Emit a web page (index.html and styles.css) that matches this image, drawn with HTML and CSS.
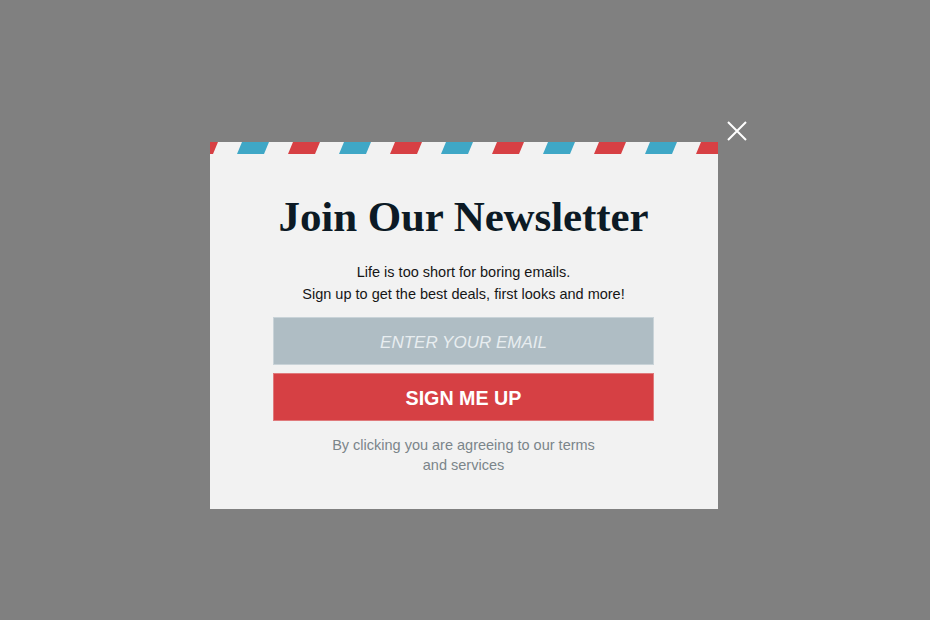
FILE: index.html
```html
<!DOCTYPE html>
<html lang="en">
<head>
<meta charset="utf-8">
<title>Join Our Newsletter</title>
<link rel="stylesheet" href="styles.css">
</head>
<body>
<div class="overlay">
  <div class="modal">
    <button class="close" aria-label="Close">
      <svg width="20" height="20" viewBox="0 0 20 20"><path d="M1 1 L19 19 M19 1 L1 19" stroke="#fff" stroke-width="2" fill="none"/></svg>
    </button>
    <svg class="stripes" width="508" height="12" viewBox="0 0 508 12">
      <g fill="#d74044">
        <polygon points="-24,12 3,12 8,0 -19,0"/>
        <polygon points="78,12 105,12 110,0 83,0"/>
        <polygon points="180,12 207,12 212,0 185,0"/>
        <polygon points="282,12 309,12 314,0 287,0"/>
        <polygon points="384,12 411,12 416,0 389,0"/>
        <polygon points="486,12 513,12 518,0 491,0"/>
      </g>
      <g fill="#3fa7c6">
        <polygon points="27,12 54,12 59,0 32,0"/>
        <polygon points="129,12 156,12 161,0 134,0"/>
        <polygon points="231,12 258,12 263,0 236,0"/>
        <polygon points="333,12 360,12 365,0 338,0"/>
        <polygon points="435,12 462,12 467,0 440,0"/>
      </g>
    </svg>
    <div class="content">
      <h1 class="title">Join Our Newsletter</h1>
      <p class="lead">Life is too short for boring emails.<br>Sign up to get the best deals, first looks and more!</p>
      <input class="email" type="email" placeholder="ENTER YOUR EMAIL">
      <button class="submit">SIGN ME UP</button>
      <p class="terms">By clicking you are agreeing to our terms and services</p>
    </div>
  </div>
</div>
</body>
</html>
```
FILE: styles.css
```css
html, body {
  margin: 0;
  padding: 0;
  height: 100%;
  background: #808080;
}
.overlay {
  padding: 142px 0 0 210px;
}
.modal {
  position: relative;
  width: 508px;
  background: #f2f2f2;
}
.close {
  position: absolute;
  top: -21px;
  right: -29px;
  width: 20px;
  height: 20px;
  padding: 0;
  border: 0;
  background: none;
  cursor: pointer;
}
.close svg { display: block; }
.stripes { display: block; }
.content {
  display: flex;
  flex-direction: column;
  align-items: center;
  padding: 37px 1px 34px 0;
}
.title {
  margin: 0;
  font-family: "Liberation Serif", "Times New Roman", serif;
  font-weight: 700;
  font-size: 43px;
  line-height: 52px;
  color: #0c1a25;
  letter-spacing: -0.1px;
}
.lead {
  margin: 18px 0 0;
  font-family: "Liberation Sans", Arial, sans-serif;
  font-size: 14.5px;
  line-height: 22px;
  color: #161616;
  text-align: center;
}
.email {
  box-sizing: border-box;
  margin-top: 12px;
  width: 381px;
  height: 48px;
  padding: 4px 0 0;
  border: 1px solid #c9d3d8;
  background: #afbdc4;
  text-align: center;
  font-family: "Liberation Sans", Arial, sans-serif;
  font-size: 17px;
  font-style: italic;
  color: #fff;
  outline: none;
}
.email::placeholder {
  color: #e8edf0;
  opacity: 1;
}
.submit {
  box-sizing: border-box;
  margin-top: 8px;
  width: 381px;
  height: 48px;
  padding: 2px 0 0;
  border: 1px solid #e07a7c;
  background: #d64044;
  color: #fff;
  font-family: "Liberation Sans", Arial, sans-serif;
  font-weight: 700;
  font-size: 19.7px;
  cursor: pointer;
}
.terms {
  margin: 14px 0 0;
  max-width: 280px;
  font-family: "Liberation Sans", Arial, sans-serif;
  font-size: 14.5px;
  line-height: 20px;
  color: #7b858a;
  text-align: center;
}
```
